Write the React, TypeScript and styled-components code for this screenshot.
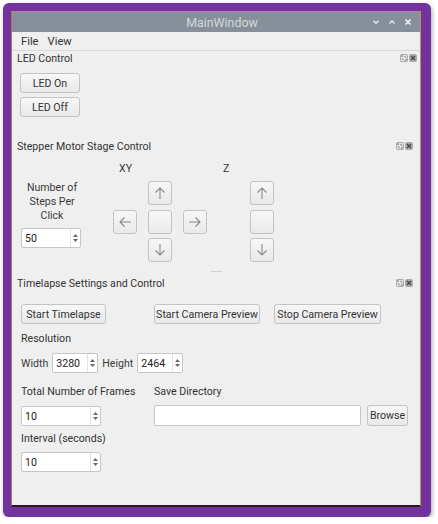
import React from "react";
import styled, { createGlobalStyle } from "styled-components";

const Global = createGlobalStyle`
  html, body { margin: 0; padding: 0; background: #ffffff; }
  body { font-family: Roboto, "Noto Sans", "DejaVu Sans", sans-serif; font-size: 10.6px; color: #3a3a3a; }
  * { box-sizing: border-box; }
`;

const Frame = styled.div`
  margin: 3px 0 0 3px;
  width: 428px;
  height: 514px;
  background: #7232a0;
  border-radius: 6px;
  box-shadow: 1px 2px 4px rgba(0, 0, 0, 0.35);
  padding: 8px 10px 10px 8px;
`;

const Window = styled.div`
  width: 410px;
  height: 496px;
  background: #efefef;
  border: 1px solid #c38c52;
  border-bottom: 2px solid #2a1a10;
  border-left-color: #b07a48;
  display: flex;
  flex-direction: column;
  position: relative;
`;

const TitleBar = styled.div`
  height: 20px;
  background: #87909a;
  display: flex;
  align-items: center;
  justify-content: center;
  padding-left: 12px;
  position: relative;
  color: #d3d7db;
  font-size: 12.4px;
`;

const TitleButtons = styled.div`
  position: absolute;
  right: 8px;
  top: 0;
  height: 20px;
  display: flex;
  align-items: center;
  gap: 8px;
`;

const MenuBar = styled.div`
  height: 19px;
  display: flex;
  align-items: center;
  padding-left: 9px;
  gap: 9px;
  border-bottom: 1px solid #d9d9d9;
  font-size: 11.2px;
  color: #333;
`;

const Content = styled.div`
  display: flex;
  flex-direction: column;
  padding-left: 5px;
  flex: 1;
`;

const DockHeader = styled.div<{ $right: number; $mt?: number }>`
  height: 15px;
  display: flex;
  align-items: center;
  justify-content: space-between;
  padding-right: ${(p) => p.$right}px;
  margin-top: ${(p) => p.$mt ?? 0}px;
  color: #333;
`;

const FloatButtons = styled.div`
  display: flex;
  gap: 1px;
  margin-top: -1px;
`;

const FloatBtn = styled.div`
  width: 8px;
  height: 8px;
  border-radius: 2px;
  background: #a9a9a9;
  display: flex;
  align-items: center;
  justify-content: center;
`;

const Button = styled.div<{ $w: number; $h?: number; $ml?: number }>`
  width: ${(p) => p.$w}px;
  height: ${(p) => p.$h ?? 20}px;
  margin-left: ${(p) => p.$ml ?? 0}px;
  border: 1px solid #c3c3c3;
  border-radius: 3px;
  background: linear-gradient(#f7f7f7, #e9e9e9);
  display: flex;
  align-items: center;
  justify-content: center;
  color: #333;
  flex-shrink: 0;
  white-space: nowrap;
`;

const LedBody = styled.div`
  display: flex;
  flex-direction: column;
  gap: 4px;
  padding: 7px 0 0 3px;
`;

const StepperBody = styled.div`
  padding: 7px 0 0 4px;
  display: flex;
  flex-direction: column;
`;

const AxisLabels = styled.div`
  height: 14px;
  display: flex;
  align-items: center;
`;

const AxisLabel = styled.span<{ $ml: number }>`
  margin-left: ${(p) => p.$ml}px;
`;

const StepperRow = styled.div`
  display: flex;
  margin-top: 6px;
`;

const StepsColumn = styled.div`
  width: 62px;
  display: flex;
  flex-direction: column;
  align-items: flex-start;
`;

const StepsText = styled.div`
  width: 62px;
  text-align: center;
  line-height: 14px;
  margin-bottom: 5px;
`;

const ArrowGrid = styled.div<{ $ml: number; $cols: number }>`
  margin-left: ${(p) => p.$ml}px;
  display: grid;
  grid-template-columns: repeat(${(p) => p.$cols}, 24px);
  grid-template-rows: repeat(3, 24px);
  column-gap: 11px;
  row-gap: 4.5px;
`;

const ArrowBtn = styled(Button)<{ $col: number; $row: number }>`
  grid-column: ${(p) => p.$col};
  grid-row: ${(p) => p.$row};
`;

const Separator = styled.div`
  height: 15px;
  display: flex;
  align-items: center;
  justify-content: center;
  padding-right: 5px;
  padding-top: 4px;
`;

const Dots = styled.div`
  width: 11px;
  height: 1px;
  background-image: radial-gradient(circle, #d2d2d2 0.5px, transparent 0.6px);
  background-size: 2px 1px;
`;

const TimelapseBody = styled.div`
  padding: 13px 0 0 4px;
  display: flex;
  flex-direction: column;
`;

const Row = styled.div<{ $gap?: number; $mt?: number }>`
  display: flex;
  align-items: center;
  gap: ${(p) => p.$gap ?? 4}px;
  margin-top: ${(p) => p.$mt ?? 0}px;
`;

const Label = styled.div<{ $mt?: number }>`
  height: 14px;
  line-height: 14px;
  margin-top: ${(p) => p.$mt ?? 0}px;
  color: #333;
`;

const SpinBox = styled.div<{ $w: number }>`
  width: ${(p) => p.$w}px;
  height: 20px;
  border: 1px solid #c6c6c6;
  border-radius: 2px;
  background: #ffffff;
  display: flex;
  align-items: center;
  flex-shrink: 0;
`;

const SpinValue = styled.span`
  flex: 1;
  padding-left: 3px;
  color: #222;
`;

const SpinArrows = styled.div`
  width: 9px;
  height: 18px;
  border-left: 1px solid #e2e2e2;
  display: flex;
  flex-direction: column;
  align-items: center;
  justify-content: center;
  gap: 2px;
  margin-right: 1px;
`;

const Grid2 = styled.div`
  display: grid;
  grid-template-columns: 133px 1fr;
  margin-top: 12px;
`;

const Col = styled.div`
  display: flex;
  flex-direction: column;
`;

const TextInput = styled.div`
  width: 207px;
  height: 21px;
  background: #ffffff;
  border: 1px solid #c6c6c6;
  border-radius: 2px;
`;

const Grip = styled.div`
  position: absolute;
  right: 2px;
  bottom: 2px;
  width: 8px;
  height: 8px;
  background-image: radial-gradient(circle, #d0d0d0 0.6px, transparent 0.7px);
  background-size: 2px 2px;
`;

const Chevron = ({ up }: { up?: boolean }) => (
  <svg width="8" height="6" viewBox="0 0 8 6">
    <path
      d={up ? "M1.5 4.5 L4 2 L6.5 4.5" : "M1.5 1.8 L4 4.3 L6.5 1.8"}
      stroke="#e9edf0"
      strokeWidth="1.4"
      fill="none"
    />
  </svg>
);

const CloseIcon = () => (
  <svg width="8" height="8" viewBox="0 0 8 8">
    <path d="M1.5 1.5 L6.5 6.5 M6.5 1.5 L1.5 6.5" stroke="#f2f4f6" strokeWidth="1.6" />
  </svg>
);

const FloatIcons = () => (
  <FloatButtons>
    <FloatBtn>
      <svg width="6" height="6" viewBox="0 0 6 6">
        <rect x="0.5" y="2.5" width="3" height="3" fill="none" stroke="#f0f0f0" strokeWidth="0.8" />
        <rect x="2.5" y="0.5" width="3" height="3" fill="none" stroke="#f0f0f0" strokeWidth="0.8" />
      </svg>
    </FloatBtn>
    <FloatBtn>
      <svg width="6" height="6" viewBox="0 0 6 6">
        <path d="M1 1 L5 5 M5 1 L1 5" stroke="#444" strokeWidth="1.2" />
      </svg>
    </FloatBtn>
  </FloatButtons>
);

type Dir = "up" | "down" | "left" | "right";
const Arrow = ({ dir }: { dir: Dir }) => {
  const paths: Record<Dir, string> = {
    up: "M8 14 V3 M3.5 7.5 L8 3 L12.5 7.5",
    down: "M8 2 V13 M3.5 8.5 L8 13 L12.5 8.5",
    left: "M14 8 H3 M7.5 3.5 L3 8 L7.5 12.5",
    right: "M2 8 H13 M8.5 3.5 L13 8 L8.5 12.5",
  };
  return (
    <svg width="16" height="16" viewBox="0 0 16 16">
      <path d={paths[dir]} stroke="#8a8a8a" strokeWidth="1.1" fill="none" />
    </svg>
  );
};

const Spin = ({ value, w }: { value: string; w: number }) => (
  <SpinBox $w={w}>
    <SpinValue>{value}</SpinValue>
    <SpinArrows>
      <svg width="5" height="3" viewBox="0 0 5 3">
        <path d="M0 3 L2.5 0 L5 3 Z" fill="#666" />
      </svg>
      <svg width="5" height="3" viewBox="0 0 5 3">
        <path d="M0 0 L2.5 3 L5 0 Z" fill="#666" />
      </svg>
    </SpinArrows>
  </SpinBox>
);

export default function App() {
  return (
    <>
      <Global />
      <Frame>
        <Window>
          <TitleBar>
            MainWindow
            <TitleButtons>
              <Chevron />
              <Chevron up />
              <CloseIcon />
            </TitleButtons>
          </TitleBar>
          <MenuBar>
            <span>File</span>
            <span>View</span>
          </MenuBar>
          <Content>
            <DockHeader $right={3}>
              <span>LED Control</span>
              <FloatIcons />
            </DockHeader>
            <LedBody>
              <Button $w={60}>LED On</Button>
              <Button $w={60}>LED Off</Button>
            </LedBody>

            <DockHeader $right={7} $mt={22}>
              <span>Stepper Motor Stage Control</span>
              <FloatIcons />
            </DockHeader>
            <StepperBody>
              <AxisLabels>
                <AxisLabel $ml={98}>XY</AxisLabel>
                <AxisLabel $ml={91}>Z</AxisLabel>
              </AxisLabels>
              <StepperRow>
                <StepsColumn>
                  <StepsText>
                    Number of
                    <br />
                    Steps Per
                    <br />
                    Click
                  </StepsText>
                  <Spin value="50" w={60} />
                </StepsColumn>
                <ArrowGrid $ml={30} $cols={3}>
                  <ArrowBtn $w={24} $h={24} $col={2} $row={1}><Arrow dir="up" /></ArrowBtn>
                  <ArrowBtn $w={24} $h={24} $col={1} $row={2}><Arrow dir="left" /></ArrowBtn>
                  <ArrowBtn $w={24} $h={24} $col={2} $row={2} />
                  <ArrowBtn $w={24} $h={24} $col={3} $row={2}><Arrow dir="right" /></ArrowBtn>
                  <ArrowBtn $w={24} $h={24} $col={2} $row={3}><Arrow dir="down" /></ArrowBtn>
                </ArrowGrid>
                <ArrowGrid $ml={43} $cols={1}>
                  <ArrowBtn $w={24} $h={24} $col={1} $row={1}><Arrow dir="up" /></ArrowBtn>
                  <ArrowBtn $w={24} $h={24} $col={1} $row={2} />
                  <ArrowBtn $w={24} $h={24} $col={1} $row={3}><Arrow dir="down" /></ArrowBtn>
                </ArrowGrid>
              </StepperRow>
            </StepperBody>

            <Separator>
              <Dots />
            </Separator>
            <DockHeader $right={7} $mt={-1}>
              <span>Timelapse Settings and Control</span>
              <FloatIcons />
            </DockHeader>
            <TimelapseBody>
              <Row>
                <Button $w={85}>Start Timelapse</Button>
                <Button $w={106} $ml={44}>Start Camera Preview</Button>
                <Button $w={107} $ml={10}>Stop Camera Preview</Button>
              </Row>
              <Label $mt={8}>Resolution</Label>
              <Row $mt={7}>
                <span>Width</span>
                <Spin value="3280" w={46} />
                <span>Height</span>
                <Spin value="2464" w={46} />
              </Row>
              <Grid2>
                <Col>
                  <Label>Total Number of Frames</Label>
                  <Row $mt={7}>
                    <Spin value="10" w={80} />
                  </Row>
                  <Label $mt={6}>Interval (seconds)</Label>
                  <Row $mt={6}>
                    <Spin value="10" w={80} />
                  </Row>
                </Col>
                <Col>
                  <Label>Save Directory</Label>
                  <Row $mt={6} $gap={6}>
                    <TextInput />
                    <Button $w={41} $h={21}>Browse</Button>
                  </Row>
                </Col>
              </Grid2>
            </TimelapseBody>
          </Content>
          <Grip />
        </Window>
      </Frame>
    </>
  );
}
